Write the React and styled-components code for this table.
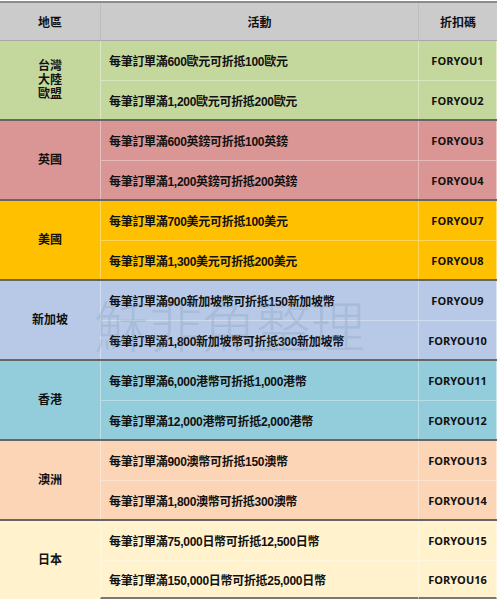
import React from 'react';
import styled, { createGlobalStyle } from 'styled-components';

const GlobalStyle = createGlobalStyle`
    body {
        margin: 0;
        background: #fff;
    }
`;

const cjk = `"Liberation Sans", "Noto Sans CJK TC", sans-serif`;

const groups = [
    {
        region: ['台灣', '大陸', '歐盟'],
        bg: '#c4d89d',
        rows: [
            ['每筆訂單滿600歐元可折抵100歐元', 'FORYOU1'],
            ['每筆訂單滿1,200歐元可折抵200歐元', 'FORYOU2'],
        ],
    },
    {
        region: ['英國'],
        bg: '#d99694',
        rows: [
            ['每筆訂單滿600英鎊可折抵100英鎊', 'FORYOU3'],
            ['每筆訂單滿1,200英鎊可折抵200英鎊', 'FORYOU4'],
        ],
    },
    {
        region: ['美國'],
        bg: '#ffc000',
        rows: [
            ['每筆訂單滿700美元可折抵100美元', 'FORYOU7'],
            ['每筆訂單滿1,300美元可折抵200美元', 'FORYOU8'],
        ],
    },
    {
        region: ['新加坡'],
        bg: '#b7c9e6',
        rows: [
            ['每筆訂單滿900新加坡幣可折抵150新加坡幣', 'FORYOU9'],
            ['每筆訂單滿1,800新加坡幣可折抵300新加坡幣', 'FORYOU10'],
        ],
    },
    {
        region: ['香港'],
        bg: '#93cddb',
        rows: [
            ['每筆訂單滿6,000港幣可折抵1,000港幣', 'FORYOU11'],
            ['每筆訂單滿12,000港幣可折抵2,000港幣', 'FORYOU12'],
        ],
    },
    {
        region: ['澳洲'],
        bg: '#fbd5b5',
        rows: [
            ['每筆訂單滿900澳幣可折抵150澳幣', 'FORYOU13'],
            ['每筆訂單滿1,800澳幣可折抵300澳幣', 'FORYOU14'],
        ],
    },
    {
        region: ['日本'],
        bg: '#fff2cc',
        rows: [
            ['每筆訂單滿75,000日幣可折抵12,500日幣', 'FORYOU15'],
            ['每筆訂單滿150,000日幣可折抵25,000日幣', 'FORYOU16'],
        ],
    },
];

const Page = styled.div`
    position: relative;
    width: 499px;
    height: 600px;
    overflow: hidden;
    background: #fff;
`;

const Table = styled.div`
    width: 497px;
    border-top: 1px solid #fff;
`;

const Header = styled.div`
    display: grid;
    grid-template-columns: 100px 318px 79px;
    height: 37px;
    background: #cbcbcb;
    border-top: 2px solid #8c8c8c;
    border-bottom: 1px solid #a8a8a8;
`;

const HeadCell = styled.div`
    display: flex;
    align-items: center;
    justify-content: center;
    font-family: ${cjk};
    font-weight: 700;
    font-size: 12px;
    color: #111;
    border-left: ${(p) => (p.$first ? 'none' : '1px solid #bdbdbd')};
`;

const Group = styled.div`
    display: grid;
    grid-template-columns: 100px 318px 79px;
    grid-template-rows: 39px 39px;
    background: ${(p) => p.$bg};
    border-bottom: ${(p) => (p.$last ? 'none' : '2px solid #666')};
`;

const Region = styled.div`
    grid-row: 1 / span 2;
    display: flex;
    flex-direction: column;
    align-items: center;
    justify-content: center;
    font-family: ${cjk};
    font-weight: 700;
    font-size: 12px;
    line-height: 14px;
    color: #111;
`;

const lineTop = (p) => (p.$second ? '1px solid rgba(255, 255, 255, 0.35)' : 'none');
const lineBottom = (p) => (p.$bottom ? '2px solid #777' : 'none');

const Activity = styled.div`
    display: flex;
    align-items: center;
    padding-left: 8px;
    font-family: ${cjk};
    font-weight: 700;
    font-size: 12px;
    color: #111;
    letter-spacing: -0.3px;
    white-space: nowrap;
    border-left: 1px solid rgba(255, 255, 255, 0.4);
    border-top: ${lineTop};
    border-bottom: ${lineBottom};
`;

const Code = styled.div`
    display: flex;
    align-items: center;
    justify-content: center;
    font-family: "Open Sans", sans-serif;
    font-weight: 700;
    font-size: 11px;
    color: #111;
    border-left: 1px solid rgba(255, 255, 255, 0.35);
    border-right: 1px solid rgba(255, 255, 255, 0.5);
    border-top: ${lineTop};
    border-bottom: ${lineBottom};
`;

const Watermark = styled.div`
    position: absolute;
    left: 94px;
    top: 283px;
    font-family: "Noto Sans CJK TC", sans-serif;
    font-weight: 300;
    font-size: 55px;
    letter-spacing: -1px;
    color: rgba(110, 140, 175, 0.22);
    pointer-events: none;
    white-space: nowrap;
`;

export default function App() {
    return (
        <Page>
            <GlobalStyle />
            <Table>
                <Header>
                    <HeadCell $first>地區</HeadCell>
                    <HeadCell>活動</HeadCell>
                    <HeadCell>折扣碼</HeadCell>
                </Header>
                {groups.map((g, gi) => {
                    const last = gi === groups.length - 1;
                    return (
                        <Group key={gi} $bg={g.bg} $last={last}>
                            <Region>
                                {g.region.map((line) => (
                                    <span key={line}>{line}</span>
                                ))}
                            </Region>
                            {g.rows.map(([text, code], ri) => (
                                <React.Fragment key={code}>
                                    <Activity $second={ri === 1} $bottom={last && ri === 1}>
                                        {text}
                                    </Activity>
                                    <Code $second={ri === 1} $bottom={last && ri === 1}>
                                        {code}
                                    </Code>
                                </React.Fragment>
                            ))}
                        </Group>
                    );
                })}
            </Table>
            <Watermark>穌非魚整理</Watermark>
        </Page>
    );
}
